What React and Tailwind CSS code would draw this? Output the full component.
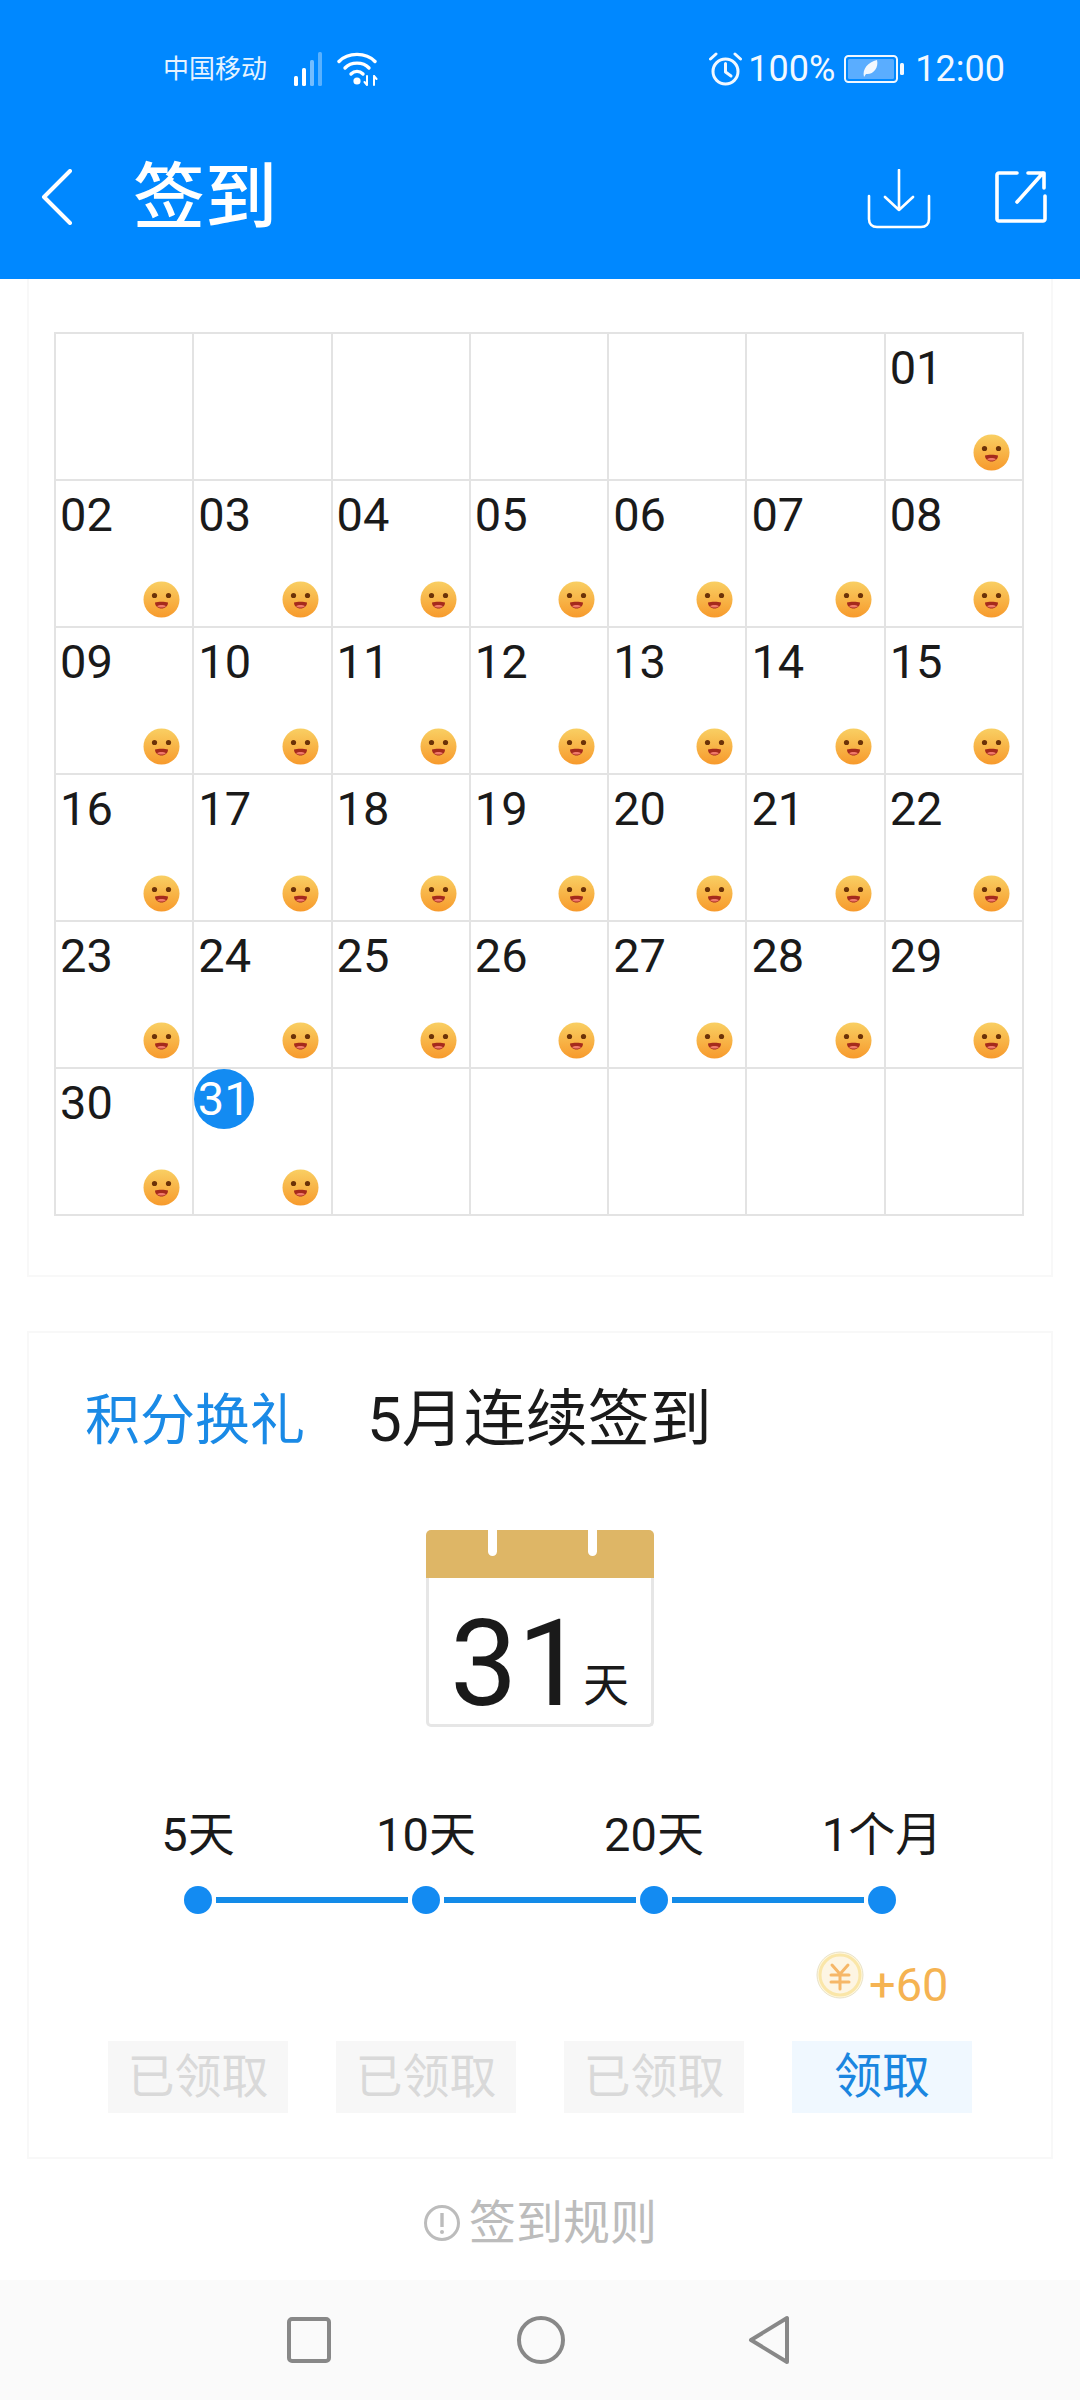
import React, { useId } from 'react';

const days = [
  null, null, null, null, null, null, '01',
  '02', '03', '04', '05', '06', '07', '08',
  '09', '10', '11', '12', '13', '14', '15',
  '16', '17', '18', '19', '20', '21', '22',
  '23', '24', '25', '26', '27', '28', '29',
  '30', '31', null, null, null, null, null,
];

const steps = ['5天', '10天', '20天', '1个月'];
const rewards = ['已领取', '已领取', '已领取', '领取'];

const Signal = () => (
  <svg width="32" height="34" viewBox="0 0 32 34" fill="#fff">
    <rect x="0" y="24" width="4" height="10" rx="1.5" />
    <rect x="8" y="16" width="4" height="18" rx="1.5" />
    <rect x="16" y="8" width="4" height="26" rx="1.5" opacity="0.45" />
    <rect x="24" y="0" width="4" height="34" rx="1.5" opacity="0.35" />
  </svg>
);

const Wifi = () => (
  <svg width="42" height="34" viewBox="0 0 42 34" fill="none" stroke="#fff" strokeWidth="3.4" strokeLinecap="round">
    <path d="M2 9.5C11 0 29 0 38 9.5" />
    <path d="M8 16C14 9.5 26 9.5 32 16" />
    <path d="M14 22C17.5 18.5 22.5 18.5 26 22" />
    <circle cx="20" cy="29" r="3.6" fill="#fff" stroke="none" />
    <path d="M30 24V33M27.5 30L30 33M37 33V24M37 24L39.5 27" strokeWidth="2" />
  </svg>
);

const Alarm = () => (
  <svg width="35" height="35" viewBox="0 0 35 35" fill="none" stroke="#fff" strokeWidth="3" strokeLinecap="round" strokeLinejoin="round">
    <circle cx="17.5" cy="19.5" r="12.5" />
    <path d="M17.5 11.5V20L23 24" />
    <path d="M2.5 7L8 2M32.5 7L27 2" />
  </svg>
);

const Battery = () => (
  <svg width="60" height="28" viewBox="0 0 60 28">
    <rect x="1" y="1" width="52" height="26" rx="3.5" fill="none" stroke="#fff" strokeWidth="2" />
    <rect x="4" y="4" width="46" height="20" rx="1.5" fill="#5fb0ff" />
    <rect x="56" y="8" width="4" height="12" rx="1.5" fill="#fff" />
    <path d="M20 22C18 14 24 7 33 5C35 13 29 20 22 19Z" fill="#fff" />
  </svg>
);

const Back = () => (
  <svg width="32" height="56" viewBox="0 0 32 56" fill="none" stroke="#fff" strokeWidth="4" strokeLinecap="round" strokeLinejoin="round">
    <path d="M29 2L3 28L29 54" />
  </svg>
);

const Download = () => (
  <svg width="64" height="60" viewBox="0 0 64 60" fill="none" stroke="#fff" strokeWidth="2.6" strokeLinecap="round" strokeLinejoin="round">
    <path d="M32 1V41M18 28L32 41L46 28" />
    <path d="M2 27V50C2 55 5 58 10 58H54C59 58 62 55 62 50V27" />
  </svg>
);

const Share = () => (
  <svg width="52" height="54" viewBox="0 0 52 54" fill="none" stroke="#fff" strokeWidth="3.6" strokeLinecap="round" strokeLinejoin="round">
    <path d="M22 3H4C3 3 2 4 2 5V49C2 50 3 51 4 51H48C49 51 50 50 50 49V26" />
    <path d="M22 32L48 3M33 3H49V18" />
  </svg>
);

const Face = () => {
  const id = useId();
  return (
    <svg width="37" height="37" viewBox="0 0 37 37" className="mt-auto mr-[12px] mb-[8px] self-end">
      <defs>
        <linearGradient id={id} x1="0" y1="0" x2="0" y2="1">
          <stop offset="0%" stopColor="#f9cf63" />
          <stop offset="100%" stopColor="#f79a2c" />
        </linearGradient>
      </defs>
      <circle cx="18.5" cy="18.5" r="18" fill={`url(#${id})`} />
      <circle cx="11.5" cy="14.5" r="2.6" fill="#6b3208" />
      <circle cx="25.5" cy="14.5" r="2.6" fill="#6b3208" />
      <path d="M12 21.5C15 20.5 22 20.5 25 21.5C25 25 22 27.5 18.5 27.5C15 27.5 12 25 12 21.5Z" fill="#a52a1c" />
      <path d="M14 25C16 23.5 21 23.5 23 25C21.5 27 15.5 27 14 25Z" fill="#f0796a" />
    </svg>
  );
};

const Coin = () => (
  <svg width="48" height="48" viewBox="0 0 48 48" fill="none">
    <circle cx="24" cy="24" r="23" fill="#fff7dd" stroke="#e8e2c8" strokeWidth="1" />
    <circle cx="24" cy="24" r="20" fill="#fdf5e3" stroke="#fae6a8" strokeWidth="3" />
    <path d="M16 14L24 23L32 14M15 24H33M15 31H33M24 23V38" stroke="#f6b768" strokeWidth="3" strokeLinecap="round" strokeLinejoin="round" />
  </svg>
);

const Info = () => (
  <svg width="38" height="38" viewBox="0 0 38 38" fill="none" stroke="#bcbcbc" strokeWidth="3">
    <circle cx="19" cy="19" r="16.5" />
    <path d="M19 9V23" strokeWidth="3.4" />
    <circle cx="19" cy="28" r="2" fill="#bcbcbc" stroke="none" />
  </svg>
);

const App = () => (
  <div className="w-[1080px] h-[2400px] flex flex-col bg-white overflow-hidden font-['Roboto','Noto_Sans_CJK_SC',sans-serif] text-[#1a1a1a]">
    {/* Blue header */}
    <header className="h-[279px] shrink-0 flex flex-col bg-[#0088ff] text-white pb-[23px]">
      <div className="h-[138px] flex items-center justify-between pl-[163px] pr-[75px]">
        <div className="flex items-center">
          <span className="text-[26px] leading-none w-[131px] opacity-90">中国移动</span>
          <Signal />
          <span className="ml-[11px]"><Wifi /></span>
        </div>
        <div className="flex items-center text-[36px] leading-none opacity-95">
          <Alarm />
          <span className="ml-[5px] w-[96px]">100%</span>
          <Battery />
          <span className="ml-[11px]">12:00</span>
        </div>
      </div>
      <div className="flex-1 flex items-center pl-[41px] pr-[33px]">
        <Back />
        <span className="ml-[60px] mt-[2px] text-[72px] leading-none font-medium">签到</span>
        <span className="ml-auto mt-[4px]"><Download /></span>
        <span className="ml-[64px]"><Share /></span>
      </div>
    </header>

    <main className="flex-1 px-[27px]">
      {/* Calendar card */}
      <section className="border-x-2 border-b-2 border-[#f8f8f8] pl-[25px] pr-[27px] pt-[53px] pb-[59px]">
        <div className="grid grid-cols-7 border-l-2 border-t-2 border-[#e3e3e3]">
          {days.map((d, i) => (
            <div key={i} className="h-[147px] flex flex-col border-r-2 border-b-2 border-[#e3e3e3]">
              {d === '31' && (
                <span className="w-[60px] h-[60px] rounded-full bg-[#138bf2] text-white text-[47px] flex items-center justify-center">{d}</span>
              )}
              {d && d !== '31' && (
                <span className="h-[60px] pl-[4px] pt-[4px] text-[47px] leading-[60px]">{d}</span>
              )}
              {d && <Face />}
            </div>
          ))}
        </div>
      </section>

      {/* Streak card */}
      <section className="mt-[54px] h-[828px] border-2 border-[#f8f8f8] flex flex-col">
        <div className="flex items-center pt-[55px] pl-[56px]">
          <span className="text-[55px] leading-[64px] text-[#1a8ae6]">积分换礼</span>
          <span className="ml-[62px] text-[62px] leading-[64px]">5月连续签到</span>
        </div>

        <div className="mt-[78px] mx-auto w-[228px] h-[197px] flex flex-col">
          <div className="relative h-[48px] shrink-0 rounded-t-[5px] bg-[#deb666]">
            <span className="absolute left-[62px] top-0 w-[9px] h-[26px] rounded-b-full bg-white"></span>
            <span className="absolute left-[162px] top-0 w-[9px] h-[26px] rounded-b-full bg-white"></span>
          </div>
          <div className="flex-1 flex items-end pl-[21px] border-x-[3px] border-b-[3px] rounded-b-[5px] border-[#e6e6e6]">
            <span className="text-[120px] leading-[120px]">31</span>
            <span className="-ml-[2px] mb-[10px] text-[46px] leading-[58px]">天</span>
          </div>
        </div>

        <div className="mt-[80px] px-[55px] grid grid-cols-4 text-[47px] leading-[56px] text-center">
          {steps.map((s) => <span key={s}>{s}</span>)}
        </div>

        <div className="mt-[23px] mx-auto w-[712px] flex items-center">
          {[0, 1, 2, 3].map((i) => (
            <React.Fragment key={i}>
              {i > 0 && <span className="flex-1 h-[6px] mx-[4px] bg-[#138be8]"></span>}
              <span className="w-[28px] h-[28px] rounded-full bg-[#138bf2]"></span>
            </React.Fragment>
          ))}
        </div>

        <div className="mt-[37px] px-[55px] grid grid-cols-4 h-[86px]">
          <div className="col-start-4 flex items-start pl-[48px]">
            <Coin />
            <span className="ml-[5px] mt-[6px] text-[47px] leading-[56px] text-[#f5b352]">+60</span>
          </div>
        </div>

        <div className="mt-[4px] px-[55px] grid grid-cols-4 justify-items-center">
          {rewards.map((r, i) => (
            <span
              key={i}
              className={
                r === '领取'
                  ? 'w-[180px] h-[72px] flex items-center justify-center text-[48px] bg-[#f0f8ff] text-[#1a86e0]'
                  : 'w-[180px] h-[72px] flex items-center justify-center text-[47px] bg-[#f7f7f7] text-[#d9d9d9]'
              }
            >
              {r}
            </span>
          ))}
        </div>
      </section>

      <div className="mt-[36px] flex items-center justify-center text-[47px] leading-[56px] text-[#bcbcbc]">
        <Info />
        <span className="ml-[8px]">签到规则</span>
      </div>
    </main>

    {/* System nav */}
    <nav className="h-[120px] shrink-0 bg-[#fafafa] flex items-center justify-center pr-[4px]">
      <svg width="44" height="46" viewBox="0 0 44 46" fill="none" stroke="#888" strokeWidth="4">
        <rect x="2" y="2" width="40" height="42" rx="3" />
      </svg>
      <svg className="ml-[186px]" width="48" height="48" viewBox="0 0 48 48" fill="none" stroke="#888" strokeWidth="4">
        <circle cx="24" cy="24" r="22" />
      </svg>
      <svg className="ml-[183px]" width="42" height="50" viewBox="0 0 42 50" fill="none" stroke="#888" strokeWidth="4" strokeLinejoin="round">
        <path d="M39 3V47L3 25Z" />
      </svg>
    </nav>
  </div>
);

export default App;
